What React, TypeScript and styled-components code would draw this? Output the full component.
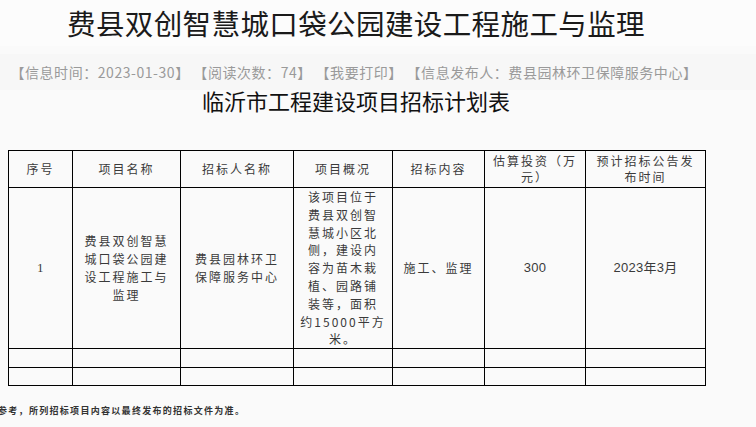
import React from "react";
import styled, { createGlobalStyle } from "styled-components";

const Global = createGlobalStyle`
  html, body { margin: 0; padding: 0; background: #fafafa; }
  body { font-family: "Noto Sans CJK SC", "Noto Sans", sans-serif; overflow: hidden; }
`;

const Page = styled.div`
  width: 712px;
  display: flex;
  flex-direction: column;
  align-items: stretch;
`;

const Title = styled.h1`
  margin: 0;
  font-size: 28.5px;
  font-weight: 400;
  letter-spacing: 0.4px;
  line-height: 46px;
  color: #1a1a1a;
  text-align: center;
  background: #fcfcfc;
  width: 756px;
  padding-right: 44px;
  box-sizing: border-box;
`;

const Meta = styled.div`
  margin-top: 8px;
  height: 36px;
  line-height: 36px;
  font-size: 14px;
  letter-spacing: 0.55px;
  color: #9a9a9a;
  text-align: center;
  background: #f7f7f7;
  width: 756px;
  padding-right: 48px;
  box-sizing: border-box;
  white-space: nowrap;
`;

const SubTitle = styled.h2`
  margin: 0;
  font-size: 22px;
  font-weight: 400;
  line-height: 20px;
  color: #111;
  text-align: center;
`;

const Table = styled.table`
  margin: 40px 0 0 8px;
  border-collapse: collapse;
  table-layout: fixed;
  width: 697px;
  color: #333;
`;

const Col = styled.col<{ $w: number }>`
  width: ${(p) => p.$w}px;
`;

const Row = styled.tr<{ $h: number }>`
  height: ${(p) => p.$h}px;
`;

const Cell = styled.td<{ $serif?: boolean; $latin?: boolean }>`
  border: 1px solid #000;
  padding: 0;
  text-align: center;
  vertical-align: middle;
  font-size: ${(p) => (p.$latin || p.$serif ? "13px" : "12px")};
  letter-spacing: ${(p) => (p.$latin || p.$serif ? "0.3px" : "2px")};
  font-family: ${(p) =>
    p.$serif
      ? '"Liberation Serif", serif'
      : p.$latin
      ? '"Liberation Sans", "Noto Sans CJK SC", sans-serif'
      : '"Noto Sans CJK SC", sans-serif'};
  line-height: 17.8px;
  color: #3a3a3a;
`;

const HeadCell = styled(Cell).attrs({ as: "th" })`
  font-weight: 400;
  line-height: 16px;
`;

const Note = styled.div`
  margin-top: 18px;
  margin-left: -2px;
  font-size: 9px;
  letter-spacing: 1.3px;
  line-height: 14px;
  font-weight: 700;
  color: #333;
  white-space: nowrap;
`;

const Lines: React.FC<{ lines: string[] }> = ({ lines }) => (
  <>
    {lines.map((l, i) => (
      <React.Fragment key={i}>
        {l}
        {i < lines.length - 1 && <br />}
      </React.Fragment>
    ))}
  </>
);

export default function App() {
  return (
    <>
      <Global />
      <Page>
        <Title>费县双创智慧城口袋公园建设工程施工与监理</Title>
        <Meta>
          【信息时间：2023-01-30】 【阅读次数：74】 【我要打印】 【信息发布人：费县园林环卫保障服务中心】
        </Meta>
        <SubTitle>临沂市工程建设项目招标计划表</SubTitle>
        <Table>
          <colgroup>
            <Col $w={64} />
            <Col $w={108} />
            <Col $w={113} />
            <Col $w={99} />
            <Col $w={92} />
            <Col $w={101} />
            <Col $w={120} />
          </colgroup>
          <thead>
            <Row $h={37}>
              <HeadCell>序号</HeadCell>
              <HeadCell>项目名称</HeadCell>
              <HeadCell>招标人名称</HeadCell>
              <HeadCell>项目概况</HeadCell>
              <HeadCell>招标内容</HeadCell>
              <HeadCell>
                <Lines lines={["估算投资（万", "元）"]} />
              </HeadCell>
              <HeadCell>
                <Lines lines={["预计招标公告发", "布时间"]} />
              </HeadCell>
            </Row>
          </thead>
          <tbody>
            <Row $h={161}>
              <Cell $serif>1</Cell>
              <Cell>
                <Lines lines={["费县双创智慧", "城口袋公园建", "设工程施工与", "监理"]} />
              </Cell>
              <Cell>
                <Lines lines={["费县园林环卫", "保障服务中心"]} />
              </Cell>
              <Cell>
                <Lines
                  lines={[
                    "该项目位于",
                    "费县双创智",
                    "慧城小区北",
                    "侧，建设内",
                    "容为苗木栽",
                    "植、园路铺",
                    "装等，面积",
                    "约15000平方",
                    "米。",
                  ]}
                />
              </Cell>
              <Cell>施工、监理</Cell>
              <Cell $latin>300</Cell>
              <Cell $latin>2023年3月</Cell>
            </Row>
            <Row $h={19}>
              <Cell />
              <Cell />
              <Cell />
              <Cell />
              <Cell />
              <Cell />
              <Cell />
            </Row>
            <Row $h={18}>
              <Cell />
              <Cell />
              <Cell />
              <Cell />
              <Cell />
              <Cell />
              <Cell />
            </Row>
          </tbody>
        </Table>
        <Note>参考，所列招标项目内容以最终发布的招标文件为准。</Note>
      </Page>
    </>
  );
}
